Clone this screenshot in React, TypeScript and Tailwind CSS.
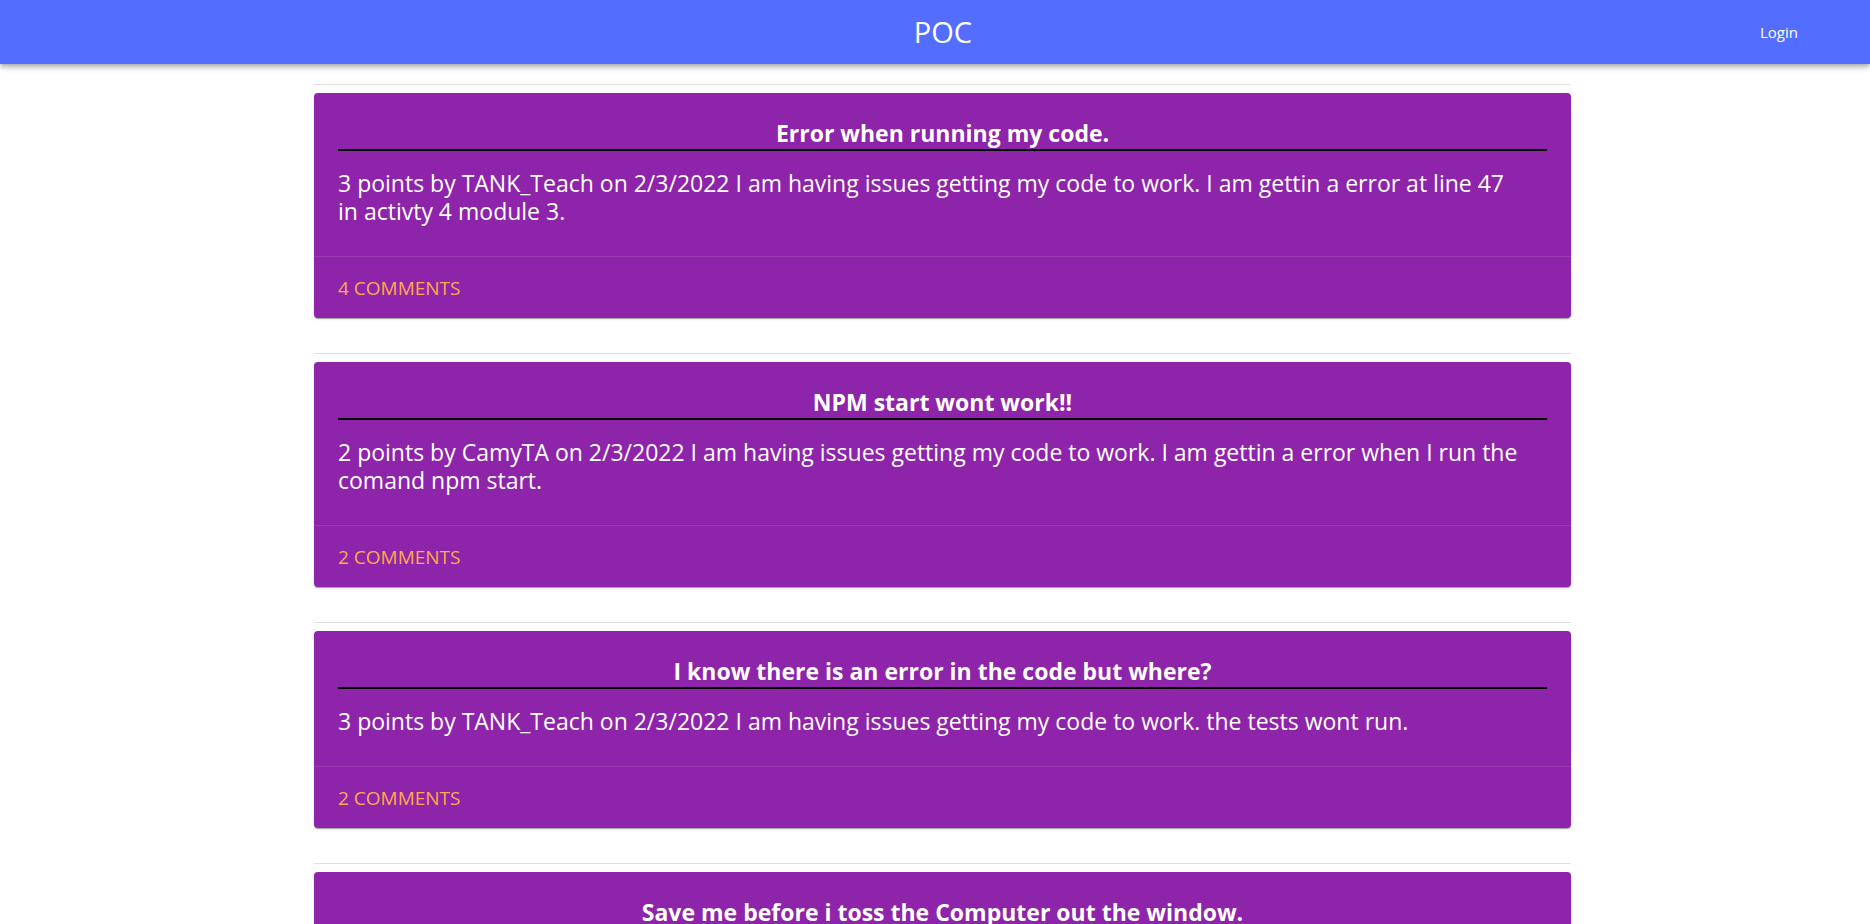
import React from 'react';

type Post = {
  title: string;
  points: number;
  author: string;
  date: string;
  body: string;
  comments: number;
};

// \u00a0 keeps "in activty" together so the wrap lands like the original
const posts: Post[] = [
  {
    title: 'Error when running my code.',
    points: 3,
    author: 'TANK_Teach',
    date: '2/3/2022',
    body: 'I am having issues getting my code to work. I am gettin a error at line 47 in\u00a0activty 4 module 3.',
    comments: 4,
  },
  {
    title: 'NPM start wont work!!',
    points: 2,
    author: 'CamyTA',
    date: '2/3/2022',
    body: 'I am having issues getting my code to work. I am gettin a error when I run the comand npm start.',
    comments: 2,
  },
  {
    title: 'I know there is an error in the code but where?',
    points: 3,
    author: 'TANK_Teach',
    date: '2/3/2022',
    body: 'I am having issues getting my code to work. the tests wont run.',
    comments: 2,
  },
  {
    title: 'Save me before i toss the Computer out the window.',
    points: 1,
    author: 'CamyTA',
    date: '2/3/2022',
    body: 'Nothing works and I have no idea why.',
    comments: 1,
  },
];

const font = { fontFamily: '"Open Sans", "Noto Sans", sans-serif' };

function PostCard({ post }: { post: Post }) {
  return (
    <div className="mb-[35px]">
      <hr className="border-0 border-t border-[#e0e0e0]" />
      <div className="mt-2 bg-[#8e24aa] rounded-[4px] text-white shadow-[0_2px_1px_-1px_rgba(0,0,0,0.2),0_1px_1px_0_rgba(0,0,0,0.14),0_1px_3px_0_rgba(0,0,0,0.12)]">
        <div className="px-6 pt-6 pb-[31px]">
          <h2 className="text-[23px] leading-[32px] font-bold text-center border-b-2 border-black">
            {post.title}
          </h2>
          <p className="mt-[18px] text-[23px] leading-[28px]">
            {post.points} points by {post.author} on {post.date} {post.body}
          </p>
        </div>
        <div className="h-[62px] border-t border-white/10 flex items-center px-6">
          <button className="text-[19px] leading-[28px] uppercase text-[#ffa94d]">
            {post.comments} Comments
          </button>
        </div>
      </div>
    </div>
  );
}

export default function App() {
  return (
    <div className="min-h-screen bg-white" style={font}>
      <header className="h-16 bg-[#536dfe] text-white flex items-center shadow-[0_2px_4px_-1px_rgba(0,0,0,0.2),0_4px_5px_0_rgba(0,0,0,0.14),0_1px_10px_0_rgba(0,0,0,0.12)]">
        <div className="flex-1" />
        <h1 className="ml-4 text-[29px] font-normal">POC</h1>
        <div className="flex-1 flex justify-end">
          <button className="mr-[72px] text-[15px]">Login</button>
        </div>
      </header>
      <main className="pt-5 pl-[314px] pr-[299px]">
        {posts.map((p) => (
          <PostCard key={p.title} post={p} />
        ))}
      </main>
    </div>
  );
}
